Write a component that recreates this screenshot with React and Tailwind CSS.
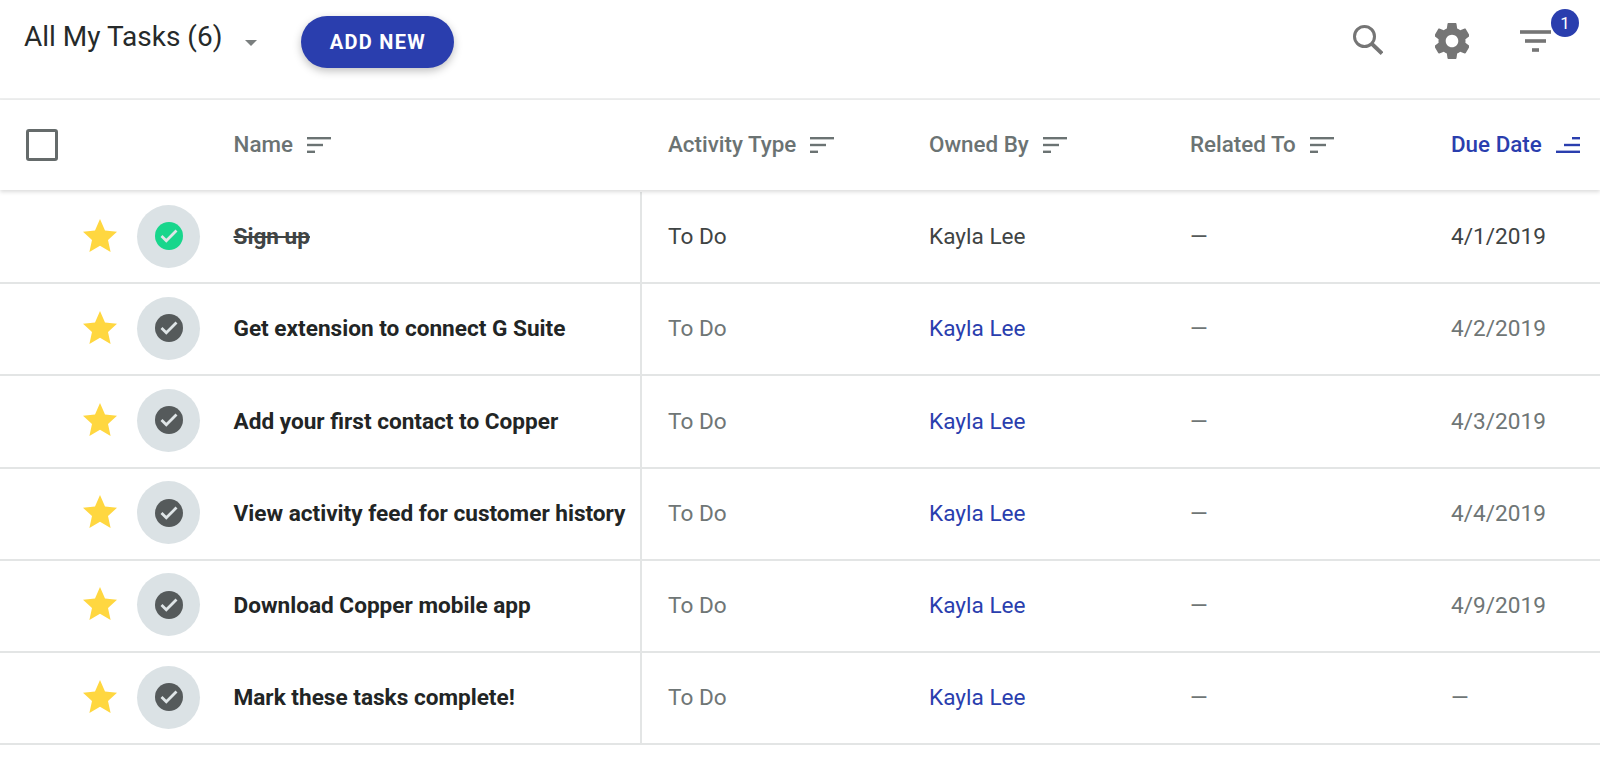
import React from 'react';

const tasks = [
  { name: 'Sign up', due: '4/1/2019', done: true },
  { name: 'Get extension to connect G Suite', due: '4/2/2019' },
  { name: 'Add your first contact to Copper', due: '4/3/2019' },
  { name: 'View activity feed for customer history', due: '4/4/2019' },
  { name: 'Download Copper mobile app', due: '4/9/2019' },
  { name: 'Mark these tasks complete!', due: '—' },
];

function SortIcon({ active = false }) {
  return (
    <svg width="24" height="16" viewBox="0 0 24 16" className={active ? 'text-[#2a3eae]' : 'text-[#6b7373]'} fill="currentColor">
      {active ? (
        <>
          <rect x="0" y="13.600" width="24" height="2.400" />
          <rect x="8" y="6.800" width="16" height="2.400" />
          <rect x="16" y="0" width="8" height="2.400" />
        </>
      ) : (
        <>
          <rect x="0" y="0" width="24" height="2.400" />
          <rect x="0" y="6.800" width="16" height="2.400" />
          <rect x="0" y="13.600" width="8" height="2.400" />
        </>
      )}
    </svg>
  );
}

function HeaderCell({ label, active, className }) {
  return (
    <div className={`flex items-center gap-[14px] text-[22.4px] font-medium ${active ? 'text-[#2a3eae]' : 'text-[#6b7373]'} ${className}`}>
      <span>{label}</span>
      <SortIcon active={active} />
    </div>
  );
}

function StatusIcon({ done }) {
  return (
    <div className="flex h-[63px] w-[63px] shrink-0 items-center justify-center rounded-full bg-[#dbe2e5]">
      <svg width="28" height="28" viewBox="0 0 28 28">
        <circle cx="14" cy="14" r="14" fill={done ? '#18d68c' : '#555a5b'} />
        <path d="M6.500 14l4.800 4.800L21.500 8.600" fill="none" stroke="#dfe5e7" strokeWidth="2.8" />
      </svg>
    </div>
  );
}

function Star() {
  return (
    <svg width="34" height="33" viewBox="0 0 34 33" className="mb-[4px] shrink-0">
      <path d="M17 0l5 11.600 12 1.200-9 8.300 2.600 11.900L17 26.800 6.400 33 9 21.100 0 12.800l12-1.200z" fill="#ffd740" />
    </svg>
  );
}

function TaskRow({ task }) {
  return (
    <div className="flex h-[92.2px] items-stretch border-b-2 border-[#e3e5e5] text-[22.6px]">
      <div className="flex w-[642px] shrink-0 items-center border-r-2 border-[#e3e5e5] pl-[83px]">
        <Star />
        <div className="mb-[2px] ml-[20px]">
          <StatusIcon done={task.done} />
        </div>
        <span
          className={`ml-[33.5px] whitespace-nowrap font-bold ${
            task.done ? 'text-[#3f4444] line-through' : 'text-[#222525]'
          }`}
        >
          {task.name}
        </span>
      </div>
      <div className={`flex w-[287px] shrink-0 items-center pl-[26px] ${task.done ? 'text-[#3f4444]' : 'text-[#6f7676]'}`}>To Do</div>
      <div className={`flex w-[261px] shrink-0 items-center ${task.done ? 'text-[#3f4444]' : 'text-[#2a3eae]'}`}>Kayla Lee</div>
      <div className={`flex w-[261px] shrink-0 items-center ${task.done ? 'text-[#555a5a]' : 'text-[#6f7676]'}`}>—</div>
      <div className={`flex items-center ${task.done ? 'text-[#3f4444]' : 'text-[#6f7676]'}`}>{task.due}</div>
    </div>
  );
}

export default function App() {
  return (
    <div className="h-[767px] w-[1600px] overflow-hidden bg-white font-['Roboto',sans-serif]">
      {/* Top bar */}
      <div className="flex h-[100px] items-start border-b-2 border-[#eeefef] pl-[24px]">
        <span className="mt-[20px] text-[28px] leading-[34px] text-[#262a2a]">All My Tasks (6)</span>
        <svg width="12" height="6" viewBox="0 0 12 6" className="ml-[23px] mt-[40px]">
          <path d="M0 0h12L6 6z" fill="#7a7f7f" />
        </svg>
        <button className="ml-[44px] mt-[16px] h-[52px] w-[153px] rounded-full bg-[#2a3eae] text-[20px] font-bold tracking-[1.3px] text-white shadow-[0_3px_8px_rgba(0,0,0,0.25)]">
          ADD NEW
        </button>
        <div className="ml-auto flex items-start pr-[49px]">
          <svg width="30" height="30" viewBox="0 0 30 30" fill="none" stroke="#757575" className="mt-[25px]">
            <circle cx="11.500" cy="11.500" r="10" strokeWidth="3" />
            <path d="M18.500 18.500L29 28.500" strokeWidth="3.800" />
          </svg>
          <svg width="34" height="36" viewBox="2.600 2 18.800 20" fill="#757575" className="ml-[52px] mt-[23px]">
            <path d="M19.430 12.980c.04-.32.070-.64.070-.98s-.030-.66-.070-.98l2.110-1.650c.19-.15.240-.42.120-.64l-2-3.460c-.12-.22-.39-.30-.61-.22l-2.490 1c-.52-.40-1.080-.73-1.690-.98l-.38-2.650C14.460 2.180 14.250 2 14 2h-4c-.25 0-.46.180-.49.420l-.38 2.650c-.61.250-1.170.590-1.690.980l-2.490-1c-.23-.090-.49 0-.61.220l-2 3.460c-.13.220-.070.490.120.640l2.110 1.650c-.04.320-.070.650-.070.980s.030.660.070.980l-2.110 1.650c-.19.150-.24.420-.12.640l2 3.460c.12.220.39.300.61.220l2.490-1c.52.400 1.080.730 1.690.980l.38 2.650c.03.240.24.420.49.420h4c.25 0 .46-.180.49-.420l.38-2.650c.61-.250 1.170-.590 1.690-.980l2.490 1c.23.090.49 0 .61-.220l2-3.460c.12-.22.070-.49-.12-.64l-2.110-1.650zM12 15.500c-1.930 0-3.500-1.570-3.500-3.500s1.570-3.500 3.500-3.500 3.500 1.570 3.500 3.500-1.570 3.500-3.500 3.500z" />
          </svg>
          <div className="relative ml-[51px] mt-[30px] h-[22px] w-[31px]">
            <svg width="31" height="22" viewBox="0 0 31 22" fill="#757575">
              <rect x="0" y="0.200" width="31" height="3.600" />
              <rect x="5" y="9.200" width="21" height="3.600" />
              <rect x="12" y="18.200" width="7" height="3.600" />
            </svg>
            <span className="absolute left-[31px] top-[-21px] flex h-[28px] w-[28px] items-center justify-center rounded-full bg-[#2a3eae] pt-[2px] text-[17px] text-white">
              1
            </span>
          </div>
        </div>
      </div>

      {/* Column headers */}
      <div className="relative flex h-[90px] items-center shadow-[0_2px_4px_rgba(0,0,0,0.14)]">
        <div className="ml-[26px] h-[32px] w-[32px] rounded-[3px] border-[3px] border-[#656b6b]" />
        <HeaderCell label="Name" className="ml-[175.5px] w-[434.5px]" />
        <HeaderCell label="Activity Type" className="w-[261px]" />
        <HeaderCell label="Owned By" className="w-[261px]" />
        <HeaderCell label="Related To" className="w-[261px]" />
        <HeaderCell label="Due Date" active />
      </div>

      <div className="pt-[2px]">
        {tasks.map((task) => (
          <TaskRow key={task.name} task={task} />
        ))}
      </div>
    </div>
  );
}
